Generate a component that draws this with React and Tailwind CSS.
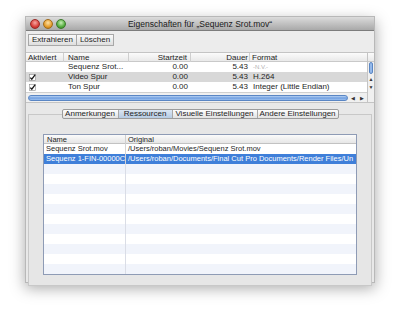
export default function App() {
  const innerRows = [
    { name: "Sequenz Srot.mov", orig: "/Users/roban/Movies/Sequenz Srot.mov" },
    { name: "Sequenz 1-FIN-00000C", orig: "/Users/roban/Documents/Final Cut Pro Documents/Render Files/Un", sel: true },
  ];
  const empties = Array.from({ length: 11 }, (_, i) => i);
  const Check = () => (
    <svg width="7" height="7" viewBox="0 0 7 7" className="block">
      <rect x="0.5" y="0.5" width="6" height="6" fill="#fff" stroke="#8a8a8a" strokeWidth="0.6" />
      <path d="M1.3 3.6 L2.8 5.2 L6.2 0.6" fill="none" stroke="#1a1a1a" strokeWidth="1.3" />
    </svg>
  );
  return (
    <div className="w-[400px] h-[317px] bg-white pt-[16px] pl-[25px] font-['Liberation_Sans',Arial,sans-serif] text-[8px] leading-[10px] text-[#1e1e1e]">
      <div className="w-[350px] h-[267px] flex flex-col bg-[#e8e8e8] border border-[#b8b8b8] shadow-[0_5px_14px_rgba(0,0,0,0.35)]">
        {/* Title bar */}
        <div className="h-[14px] shrink-0 flex items-center relative bg-gradient-to-b from-[#dcdcdc] to-[#a9a9a9] border-b border-[#7c7c7c]">
          <div className="flex gap-[3px] pl-[4px]">
            <div className="w-[10px] h-[10px] rounded-full bg-[radial-gradient(circle_at_50%_35%,#f6a8a2,#d8403a_60%,#a3231f)] border border-[#9a2b27]" />
            <div className="w-[10px] h-[10px] rounded-full bg-[radial-gradient(circle_at_50%_35%,#fde1a6,#e59d2c_60%,#a86a12)] border border-[#a06a1a]" />
            <div className="w-[10px] h-[10px] rounded-full bg-[radial-gradient(circle_at_50%_35%,#c8efb8,#55ad3f_60%,#2f7a22)] border border-[#3c7a2c]" />
          </div>
          <div className="absolute inset-0 flex items-center justify-center text-[8.5px] text-[#1a1a1a]">
            Eigenschaften für „Sequenz Srot.mov“
          </div>
        </div>
        {/* Toolbar */}
        <div className="h-[21px] shrink-0 flex items-start pt-[3px] pl-[2px] bg-[#ececec]">
          <div className="flex h-[12px] border border-[#a8a8a8] bg-gradient-to-b from-[#fafafa] to-[#dedede]">
            <div className="px-[3px] flex items-center border-r border-[#a8a8a8]">Extrahieren</div>
            <div className="px-[3px] flex items-center">Löschen</div>
          </div>
        </div>
        {/* Upper table */}
        <div className="flex shrink-0 bg-white border-t border-[#c4c4c4]">
          <div className="flex-1 flex flex-col">
            <div className="h-[9px] flex items-center bg-gradient-to-b from-[#fbfbfb] to-[#e9e9e9] border-b border-[#c9c9c9] leading-[9px]">
              <div className="w-[38px] pl-[2px] border-r border-[#cfcfcf]">Aktiviert</div>
              <div className="w-[65px] pl-[4px] border-r border-[#cfcfcf]">Name</div>
              <div className="w-[62px] pr-[3px] text-right border-r border-[#cfcfcf]">Startzeit</div>
              <div className="w-[59px] pr-[1px] text-right border-r border-[#cfcfcf]">Dauer</div>
              <div className="flex-1 pl-[2px]">Format</div>
            </div>
            {[
              { c: false, n: "Sequenz Srot...", s: "0.00", d: "5.43", f: "-N.V.-", gray: true },
              { c: true, n: "Video Spur", s: "0.00", d: "5.43", f: "H.264", sel: true },
              { c: true, n: "Ton Spur", s: "0.00", d: "5.43", f: "Integer (Little Endian)" },
            ].map((r, i) => (
              <div key={i} className={`h-[10px] flex items-center ${r.sel ? "bg-[#d8d8d8]" : "bg-white"}`}>
                <div className="w-[38px] pl-[3px]">{r.c ? <Check /> : null}</div>
                <div className="w-[65px] pl-[4px] whitespace-nowrap">{r.n}</div>
                <div className="w-[62px] pr-[3px] text-right">{r.s}</div>
                <div className="w-[59px] pr-[2px] text-right">{r.d}</div>
                <div className={`flex-1 pl-[3px] whitespace-nowrap ${r.gray ? "text-[#b0b0b0] text-[6px]" : ""}`}>{r.f}</div>
              </div>
            ))}
            <div className="h-[10px] flex items-center pl-[2px] bg-[#f0f0f0] border-t border-[#d0d0d0]">
              <div className="flex-1 h-[6px] rounded-full bg-gradient-to-b from-[#b9d3f3] via-[#6f9ee0] to-[#9cc0ee] border border-[#5a86c4]" />
              <div className="w-[19px] flex justify-around items-center text-[5px] text-[#333]">
                <span>◀</span>
                <span>▶</span>
              </div>
            </div>
          </div>
          <div className="w-[7px] flex flex-col border-l border-[#c4c4c4] bg-[#f0f0f0]">
            <div className="h-[9px] bg-gradient-to-b from-[#fbfbfb] to-[#e9e9e9] border-b border-[#c9c9c9]" />
            <div className="h-[12px] mx-[1px] rounded-full bg-gradient-to-r from-[#6f9ee0] via-[#b9d3f3] to-[#6f9ee0] border border-[#5a86c4]" />
            <div className="flex-1 flex flex-col items-center justify-end pb-[12px] gap-[2px] text-[5px] leading-[6px] text-[#333]">
              <span>▲</span>
              <span>▼</span>
            </div>
          </div>
        </div>
        {/* Tab area */}
        <div className="flex-1 flex flex-col pt-[6px] px-[2px] pb-[10px] border-t border-[#c4c4c4]">
          <div className="relative z-10 flex justify-center -mb-[5px]">
            <div className="flex h-[10px] border border-[#9c9c9c] rounded-[2px] overflow-hidden bg-gradient-to-b from-[#fdfdfd] to-[#e2e2e2] leading-[8px]">
              <div className="w-[56px] flex items-center justify-center border-r border-[#a8a8a8]">Anmerkungen</div>
              <div className="w-[54px] flex items-center justify-center border-r border-[#a8a8a8] bg-gradient-to-b from-[#dbe6f3] to-[#b6cbe3]">Ressourcen</div>
              <div className="w-[85px] flex items-center justify-center border-r border-[#a8a8a8]">Visuelle Einstellungen</div>
              <div className="w-[80px] flex items-center justify-center">Andere Einstellungen</div>
            </div>
          </div>
          <div className="flex-1 flex flex-col border border-[#c8c8c8] bg-[#e6e6e6] pt-[19px] px-[14px] pb-[10px]">
            <div className="flex-1 flex flex-col overflow-hidden border border-[#8e9bb5] bg-white text-[7.5px]">
              <div className="h-[9px] shrink-0 flex items-center bg-gradient-to-b from-[#fbfbfb] to-[#e6e6e6] border-b border-[#c2c2c2] leading-[9px]">
                <div className="w-[82px] pl-[3px] border-r border-[#cfcfcf]">Name</div>
                <div className="flex-1 pl-[2px]">Original</div>
              </div>
              {innerRows.map((r, i) => (
                <div key={i} className={`h-[10px] shrink-0 flex items-center whitespace-nowrap overflow-hidden ${r.sel ? "bg-[#3f7fd9] text-white" : "bg-white"}`}>
                  <div className="w-[82px] pl-[2px] overflow-hidden border-r border-[#d4d4d4]">{r.name}</div>
                  <div className="flex-1 pl-[2px] overflow-hidden">{r.orig}</div>
                </div>
              ))}
              {empties.map((i) => (
                <div key={i} className={`h-[10px] shrink-0 flex ${i % 2 === 1 ? "bg-white" : "bg-[#f1f4fb]"}`}>
                  <div className="w-[82px] border-r border-[#dadde6]" />
                  <div className="flex-1" />
                </div>
              ))}
            </div>
          </div>
        </div>
      </div>
    </div>
  );
}
